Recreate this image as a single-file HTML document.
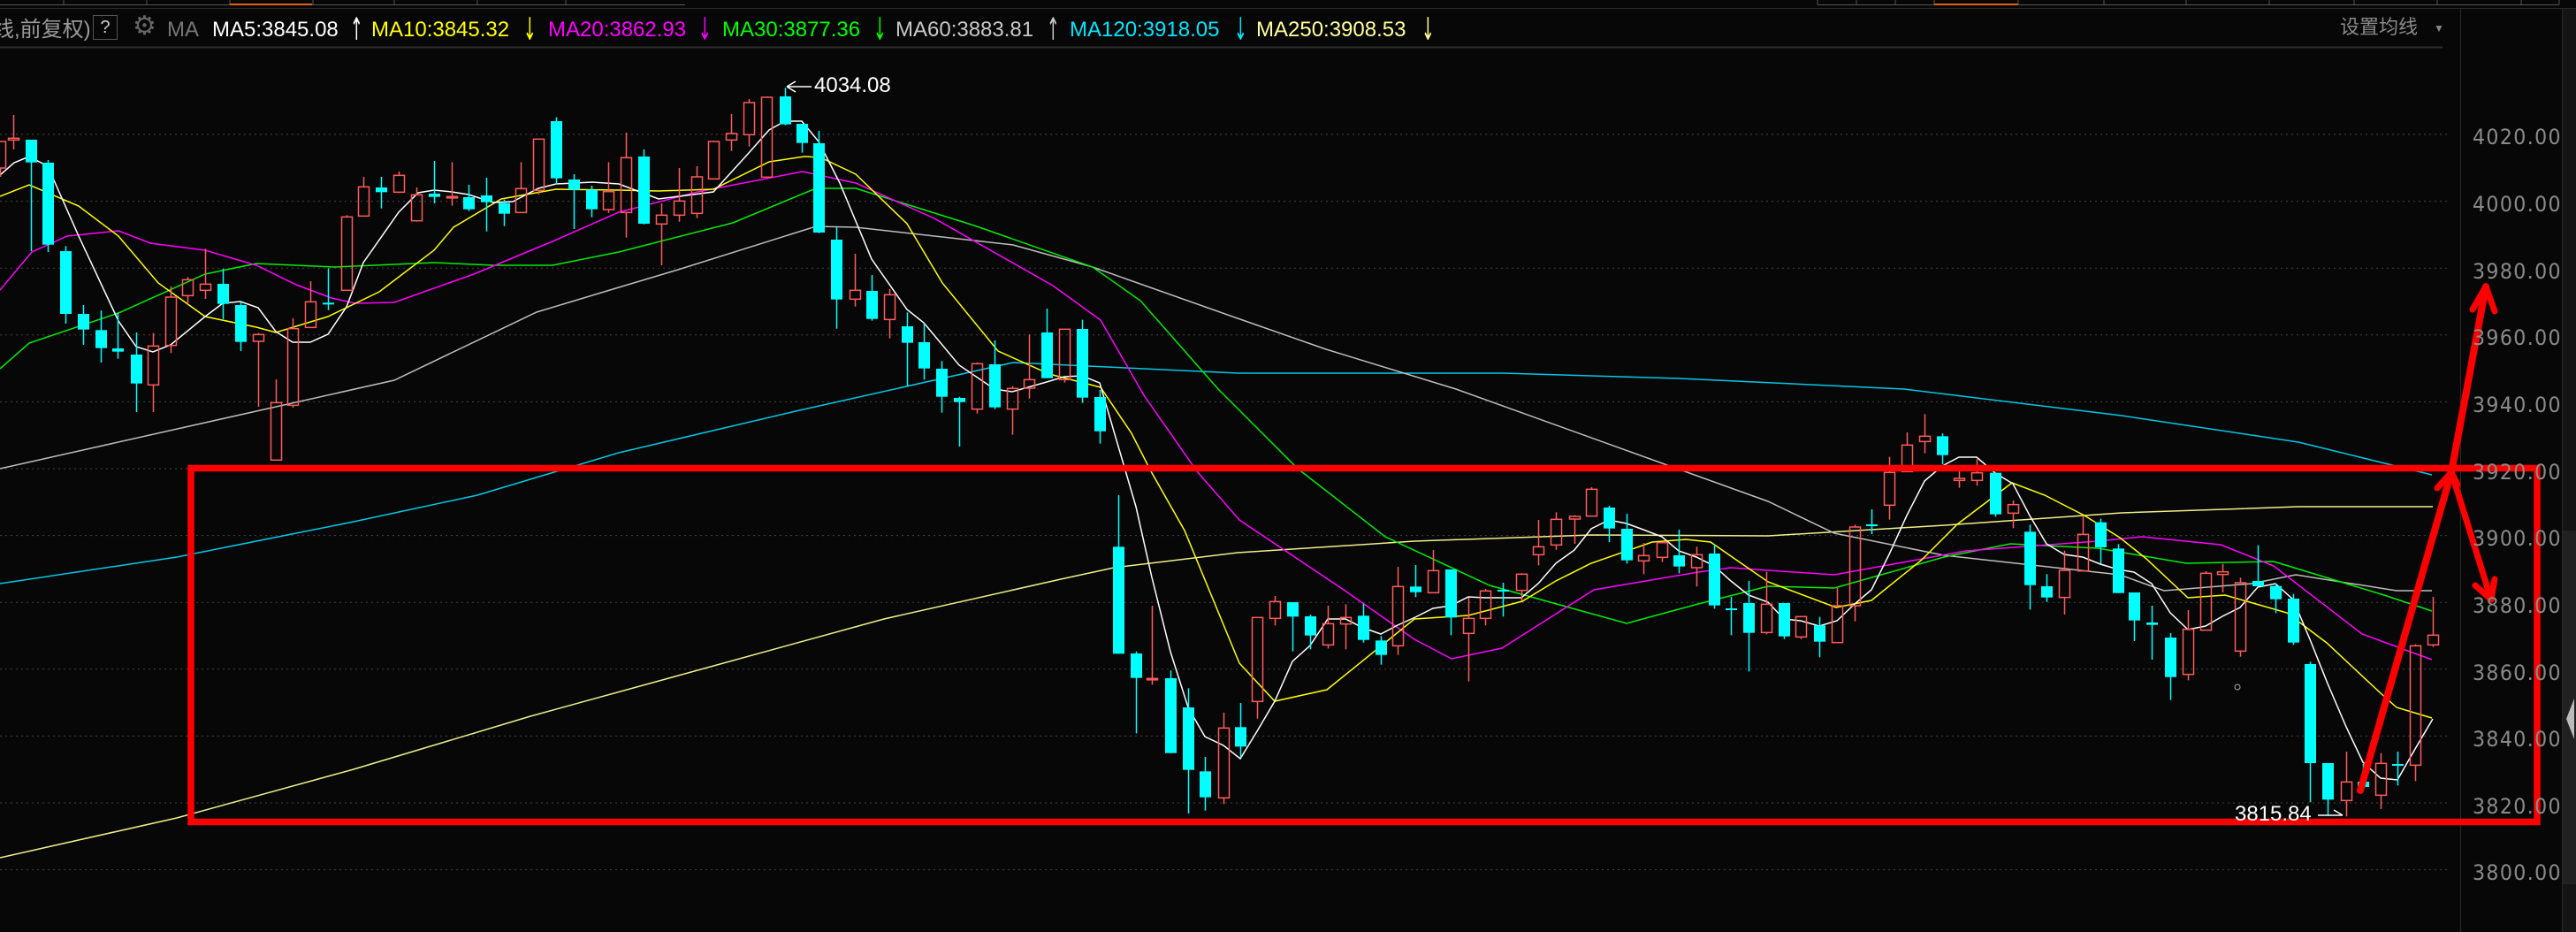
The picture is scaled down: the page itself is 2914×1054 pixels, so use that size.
<!DOCTYPE html>
<html><head><meta charset="utf-8">
<style>
html,body{margin:0;padding:0;background:#070707;width:2914px;height:1054px;overflow:hidden;}
body{position:relative;font-family:"Liberation Sans","Noto Sans CJK SC",sans-serif;}
.t{position:absolute;white-space:nowrap;font-size:24px;line-height:24px;top:22px;}
.ar{position:absolute;top:18px;font-size:22px;line-height:22px;transform:scaleY(1.6) scaleX(0.8);transform-origin:top left;font-family:"DejaVu Sans",sans-serif;}
.ax{position:absolute;left:2797px;font-size:24px;color:#8a8a8a;letter-spacing:1.5px;font-family:"DejaVu Sans","Liberation Sans",sans-serif;transform:scaleX(0.92);transform-origin:left;}
svg{position:absolute;left:0;top:0;}
</style></head><body>
<svg id="s" width="2914" height="1054" viewBox="0 0 2914 1054"></svg>
<div class="t" style="left:-8px;color:#9a9a9a;">线,前复权)</div>
<div style="position:absolute;left:105px;top:17px;width:26px;height:26px;border:1px solid #555;color:#ccc;font-size:20px;line-height:26px;text-align:center;">?</div>
<div class="t" style="left:150px;top:18px;color:#666;font-size:30px;">⚙</div>
<div class="t" style="left:189px;color:#777;">MA</div>
<div class="t" style="left:240px;color:#fff;">MA5:3845.08</div>
<div class="ar" style="left:396px;color:#fff;">↑</div>
<div class="t" style="left:420px;color:#ffff00;">MA10:3845.32</div>
<div class="ar" style="left:592px;color:#ffff00;">↓</div>
<div class="t" style="left:620px;color:#ff00ff;">MA20:3862.93</div>
<div class="ar" style="left:790px;color:#ff00ff;">↓</div>
<div class="t" style="left:817px;color:#00ff00;">MA30:3877.36</div>
<div class="ar" style="left:988px;color:#00ff00;">↓</div>
<div class="t" style="left:1013px;color:#c8c8c8;">MA60:3883.81</div>
<div class="ar" style="left:1184px;color:#c8c8c8;">↑</div>
<div class="t" style="left:1210px;color:#00e5ff;">MA120:3918.05</div>
<div class="ar" style="left:1396px;color:#00e5ff;">↓</div>
<div class="t" style="left:1421px;color:#ffff99;">MA250:3908.53</div>
<div class="ar" style="left:1608px;color:#ffff99;">↓</div>
<div class="t" style="left:2647px;top:19px;color:#8a8a8a;font-size:22px;">设置均线</div>
<div class="t" style="left:2753px;top:20px;color:#888;font-size:12px;">▼</div>
<div class="ax" style="top:141px">4020.00</div>
<div class="ax" style="top:217px">4000.00</div>
<div class="ax" style="top:293px">3980.00</div>
<div class="ax" style="top:368px">3960.00</div>
<div class="ax" style="top:444px">3940.00</div>
<div class="ax" style="top:520px">3920.00</div>
<div class="ax" style="top:595px">3900.00</div>
<div class="ax" style="top:671px">3880.00</div>
<div class="ax" style="top:747px">3860.00</div>
<div class="ax" style="top:822px">3840.00</div>
<div class="ax" style="top:898px">3820.00</div>
<div class="ax" style="top:973px">3800.00</div>
<div class="t" style="left:921px;top:85px;color:#fff;">4034.08</div>
<div class="t" style="left:2528px;top:909px;color:#fff;">3815.84</div>
<script>
var S='';
function L(x1,y1,x2,y2,c,w,extra){S+='<line x1="'+x1+'" y1="'+y1+'" x2="'+x2+'" y2="'+y2+'" stroke="'+c+'" stroke-width="'+(w||1)+'" '+(extra||'')+'/>';}
L(0,5.5,775,5.5,'#555',1);
[72,166,260,354,446,540,640].forEach(function(x){L(x,0,x,5,'#555',1);});
L(260,5,353,5,'#e0601a',2);
L(2056,5.5,2895,5.5,'#555',1);
[2056,2100,2144,2188,2283,2380,2473,2567,2663,2757,2852,2895].forEach(function(x){L(x,0,x,5,'#555',1);});
L(2188,5,2283,5,'#e0601a',2);
L(0,9.5,2914,9.5,'#2a2a2a',1);
L(0,53.5,2763,53.5,'#2e2e2e',2);
L(2783.5,10,2783.5,1054,'#2c2c2c',1);
L(2898.5,10,2898.5,1054,'#2a2a2a',1);
S+='<rect x="2899" y="10" width="15" height="1044" fill="#141414"/>';
S+='<rect x="2899" y="600" width="15" height="400" fill="#2a2a2a" opacity="0.6"/>';
S+='<polygon points="2912,790 2903,813 2912,836" fill="#bbb"/>';
for(var i=0;i<12;i++){var y=152+i*75.6;L(0,y,2770,y,'#444',1,'stroke-dasharray="2,4"');}
function P(pts,c,w){S+='<polyline fill="none" stroke="'+c+'" stroke-width="'+(w||1.5)+'" points="'+pts.map(function(p){return p.join(',')}).join(' ')+'"/>';}
P([[0,970],[200,925],[400,870],[600,810],[800,755],[1000,700],[1200,655],[1260,642],[1400,625],[1600,612],[1800,605],[2000,606],[2200,594],[2400,580],[2600,573],[2752,573]],'#f0f08a');
P([[0,660],[200,630],[400,590],[540,560],[700,512],[900,465],[1146,410],[1400,422],[1700,422],[1900,428],[2154,440],[2400,470],[2600,500],[2751,537]],'#00c8e8');
P([[0,530],[223,480],[446,430],[607,353],[700,325],[767,305],[923,256],[968,257],[1146,277],[1236,302],[1400,360],[1500,395],[1647,440],[2000,567],[2075,603],[2199,628],[2398,650],[2448,668],[2547,660],[2597,650],[2711,668],[2751,668]],'#bdbdbd');
P([[0,417],[33,388],[134,354],[232,310],[290,298],[379,302],[491,297],[558,300],[625,300],[700,285],[829,252],[923,213],[968,213],[1102,255],[1236,302],[1290,340],[1378,440],[1468,530],[1567,607],[1685,662],[1840,705],[1921,683],[2000,663],[2075,665],[2199,630],[2274,615],[2373,620],[2473,637],[2572,635],[2697,673],[2751,691]],'#00ee00');
P([[0,328],[36,285],[76,267],[134,261],[170,275],[232,283],[290,300],[335,322],[375,337],[402,343],[446,342],[536,310],[625,273],[700,240],[789,217],[908,194],[968,207],[1057,247],[1191,323],[1245,362],[1294,447],[1354,533],[1402,588],[1520,667],[1600,723],[1642,745],[1699,733],[1803,667],[1921,647],[1958,642],[2000,645],[2075,650],[2224,623],[2373,612],[2423,607],[2512,616],[2572,640],[2672,717],[2751,746]],'#ff00ff');
P([[0,222],[33,209],[89,233],[134,267],[179,320],[232,358],[290,370],[312,376],[371,358],[429,330],[491,283],[513,257],[567,225],[629,214],[700,215],[745,216],[807,214],[870,183],[910,177],[928,178],[968,197],[1026,253],[1066,320],[1129,397],[1187,423],[1245,438],[1280,490],[1302,533],[1340,600],[1402,750],[1442,793],[1501,780],[1600,700],[1661,696],[1722,680],[1760,657],[1800,637],[1869,613],[1907,610],[1935,613],[2000,658],[2077,687],[2117,679],[2174,633],[2214,593],[2276,546],[2313,560],[2358,583],[2398,608],[2428,632],[2475,676],[2517,673],[2587,693],[2632,727],[2692,783],[2711,800],[2751,812]],'#ffff00');
P([[0,198],[16,184],[33,177],[54,188],[89,267],[134,363],[154,392],[173,398],[193,390],[232,358],[252,343],[272,341],[292,348],[312,375],[331,387],[351,387],[371,378],[392,347],[411,297],[451,240],[473,218],[491,215],[511,217],[530,220],[558,229],[580,228],[609,213],[629,208],[670,206],[700,208],[745,225],[807,217],[847,173],[870,147],[888,137],[907,137],[926,160],[950,207],[986,293],[1026,350],[1045,365],[1085,413],[1125,440],[1145,443],[1184,432],[1204,426],[1224,425],[1244,433],[1285,573],[1303,653],[1324,737],[1344,800],[1363,833],[1384,843],[1403,858],[1422,827],[1442,793],[1462,748],[1482,730],[1502,700],[1522,700],[1542,710],[1562,717],[1581,707],[1601,698],[1621,688],[1641,685],[1661,675],[1680,676],[1721,676],[1740,660],[1760,637],[1781,622],[1800,598],[1820,588],[1840,592],[1859,599],[1880,607],[1899,623],[1919,630],[1939,640],[1958,657],[1978,673],[2000,681],[2018,700],[2037,702],[2058,708],[2078,702],[2098,683],[2117,667],[2137,627],[2157,583],[2177,544],[2197,527],[2216,517],[2236,517],[2257,535],[2277,547],[2296,583],[2315,615],[2335,627],[2356,630],[2376,638],[2396,644],[2414,647],[2434,660],[2455,693],[2475,712],[2495,708],[2514,697],[2534,687],[2554,664],[2574,660],[2594,678],[2613,723],[2633,773],[2654,822],[2673,862],[2693,880],[2712,882],[2732,847],[2752,813]],'#ffffff');
var segs=[
 [0,2.24,80,3,[[0,'r',240,330,240,360],[33,'r',229,235,150,267],[78,'c',234,311,234,612],[120,'c',312,590,303,615],[165,'c',612,825,595,858],[210,'c',825,878,795,930],[255,'c',880,941,813,990],[299,'c',942,953,820,977],[344,'c',963,1061,888,1158],[387,'r',934,1066,890,1158],[432,'r',768,932,732,958],[476,'r',709,763,700,792],[520,'r',724,745,604,774],[565,'c',723,791,672,843],[610,'c',795,920,784,951],[653,'r',895,918,890,1140],[698,'r',1126,1321,1047,1321],[742,'r',875,1135,840,1143],[787,'r',784,871,714,871],[832,'c',787,791,670,812],[877,'r',496,745,490,745],[920,'r',394,493,360,493],[965,'c',396,412,360,467],[1010,'r',355,412,342,415],[1054,'r',421,509,396,512],[1099,'c',417,428,306,450],[1144,'r',427,431,310,458],[1188,'c',429,470,387,476],[1232,'c',423,446,363,545],[1276,'c',449,485,437,527],[1320,'r',400,481,310,481],[1365,'r',232,406,232,420],[1410,'c',171,365,158,385],[1454,'c',369,404,351,537],[1498,'c',404,470,390,497],[1542,'r',410,471,310,482]]],
 [700,2.24,80,3,[[18,'r',295,481,210,566],[63,'c',291,519,267,521],[108,'r',490,520,450,660],[153,'r',442,490,330,512],[196,'r',360,484,324,500],[240,'r',240,367,238,367],[285,'r',213,235,147,272],[330,'r',108,217,96,257],[375,'r',90,361,87,361],[420,'c',87,182,58,185],[464,'c',180,245,180,278],[507,'c',246,549,204,551],[552,'c',573,776,530,875],[597,'r',745,775,621,800],[641,'c',747,842,693,848],[686,'r',760,844,740,908],[731,'c',867,923,820,1070],[773,'c',921,1010,858,1048],[818,'c',1011,1106,985,1160],[863,'c',1110,1124,1106,1275],[908,'r',994,1148,990,1163],[953,'c',996,1142,915,1148],[997,'r',1078,1148,1070,1235],[1040,'r',1048,1077,895,1112],[1085,'c',888,1043,807,1043],[1130,'r',877,1048,877,1058],[1174,'c',876,1109,845,1127],[1219,'c',1107,1223,1083,1265]]],
 [1260,2.119,440,3,[[10,'c',535,898,360,898],[52,'c',897,980,890,1168],[92,'r',982,984,735,1003],[135,'c',981,1235,955,1235],[177,'c',1080,1292,1015,1440],[219,'c',1297,1385,1248,1430],[262,'r',1150,1387,1098,1408],[304,'c',1147,1213,1065,1250],[344,'r',775,1060,775,1118],[386,'r',721,778,702,802],[429,'c',723,772,723,890],[471,'c',771,836,765,883],[513,'r',796,868,735,880],[556,'r',775,797,730,883],[597,'c',769,851,728,860],[639,'c',853,902,838,935],[681,'r',670,871,603,902],[723,'c',670,689,597,706],[766,'r',616,691,546,691],[808,'c',612,775,612,835],[849,'r',778,829,708,992],[891,'r',685,778,678,802],[933,'c',681,684,657,772],[976,'r',628,683,625,718],[1018,'r',535,562,444,598],[1060,'r',442,529,418,545],[1103,'r',432,441,428,525],[1144,'r',340,431,333,431],[1186,'c',402,473,396,519],[1228,'c',474,581,423,592],[1270,'r',565,583,522,628],[1313,'r',521,571,518,587],[1355,'c',564,602,477,625],[1396,'r',562,606,535,670],[1438,'c',558,734,528,745],[1480,'c',744,746,705,835],[1522,'c',726,827,651,958],[1564,'r',730,826,620,832]]],
 [2000,2.01,440,3,[[36,'c',726,839,726,848],[75,'r',772,841,772,848],[116,'c',802,857,773,910],[156,'r',735,860,675,862],[196,'r',468,735,460,788],[236,'c',459,465,408,492],[276,'r',283,394,230,443],[316,'r',190,280,147,280],[355,'r',160,178,85,218],[395,'c',160,224,150,255],[435,'r',303,310,260,335],[475,'r',284,310,238,328],[516,'c',284,425,284,433],[556,'r',392,421,378,472],[595,'c',484,665,460,748],[634,'c',669,707,628,722],[674,'r',615,707,548,765],[715,'r',493,617,430,617],[755,'c',452,537,440,592],[795,'c',541,692,526,692],[833,'c',690,785,690,855],[873,'c',792,800,735,918],[914,'c',843,977,828,1055],[955,'r',815,968,750,988],[994,'r',625,818,618,818],[1034,'r',620,629,593,690],[1073,'r',657,889,640,908],[1113,'c',651,669,530,669],[1153,'c',668,713,660,760],[1193,'c',711,860,695,868],[1233,'c',933,1269,925,1402],[1273,'c',1269,1393,1269,1445],[1314,'r',1333,1396,1230,1450],[1352,'c',1332,1350,1272,1350],[1392,'r',1270,1378,1235,1425],[1432,'c',1272,1275,1230,1345],[1472,'r',871,1276,866,1330],[1512,'r',835,868,705,875]]]
];
segs.forEach(function(sg){var ox=sg[0],fx=sg[1],oy=sg[2],fy=sg[3];sg[4].forEach(function(d){
 var x=Math.round(ox+d[0]/fx)+0.5,bt=oy+d[2]/fy,bb=oy+d[3]/fy,wt=oy+d[4]/fy,wb=oy+d[5]/fy;
 if(d[1]=='c'){L(x,wt,x,wb,'#00ffff',1.5);S+='<rect x="'+(x-6.5)+'" y="'+bt+'" width="13" height="'+Math.max(2,bb-bt)+'" fill="#00ffff"/>';}
 else{L(x,wt,x,bt,'#ff5a5a',1.5);L(x,bb,x,wb,'#ff5a5a',1.5);S+='<rect x="'+(x-6)+'" y="'+bt+'" width="12" height="'+Math.max(1.5,bb-bt)+'" fill="none" stroke="#ff5a5a" stroke-width="1.5"/>';}
});});
L(890,98,918,98,'#fff',1.5);L(890,98,900,92,'#fff',1.5);L(890,98,900,104,'#fff',1.5);
L(2622,922,2650,922,'#fff',1.5);L(2650,922,2640,916,'#fff',1.5);
S+='<circle cx="2531" cy="777" r="3" fill="none" stroke="#aaa" stroke-width="1"/>';
S+='<rect x="216" y="529.5" width="2654" height="400" fill="none" stroke="#ff0000" stroke-width="7.5"/>';
var R='#ff0000';
L(2670,894,2773,534,R,8,'stroke-linecap="round"');
L(2773,534,2812,324,R,8,'stroke-linecap="round"');
L(2812,324,2797,350,R,7,'stroke-linecap="round"');L(2812,324,2822,352,R,7,'stroke-linecap="round"');
L(2775,540,2818,678,R,7,'stroke-linecap="round"');
L(2818,678,2800,662,R,7,'stroke-linecap="round"');L(2818,678,2822,655,R,7,'stroke-linecap="round"');
L(2773,534,2757,552,R,7,'stroke-linecap="round"');L(2773,534,2780,548,R,7,'stroke-linecap="round"');
document.getElementById('s').innerHTML=S;
</script>
</body></html>
